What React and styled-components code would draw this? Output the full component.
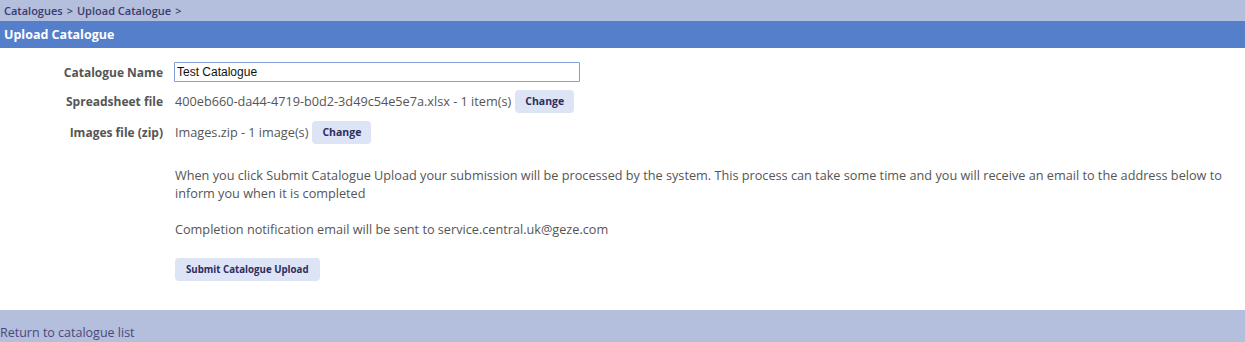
import React, { useState } from "react";
import styled, { createGlobalStyle } from "styled-components";

const GlobalStyle = createGlobalStyle`
  html, body {
    margin: 0;
    padding: 0;
    background: #ffffff;
  }
  body {
    font-family: "Open Sans", "Noto Sans", sans-serif;
    font-size: 12.7px;
    color: #555555;
  }
`;

const Page = styled.div`
  width: 1245px;
  min-height: 342px;
  display: flex;
  flex-direction: column;
`;

const Breadcrumb = styled.div`
  height: 21px;
  background: #b4bedd;
  display: flex;
  align-items: center;
  padding-left: 4px;
  font-size: 11px;
  font-weight: 600;
  color: #3b3b6b;
  gap: 4px;
`;

const TitleBar = styled.div`
  height: 27px;
  background: #557ecb;
  display: flex;
  align-items: center;
  padding-left: 4px;
  color: #ffffff;
  font-size: 12.5px;
  font-weight: 700;
`;

const Form = styled.div`
  display: grid;
  grid-template-columns: 163px 1fr;
  column-gap: 12px;
  padding-top: 14px;
  padding-bottom: 28px;
`;

const Label = styled.div`
  font-size: 12px;
  font-weight: 700;
  color: #555555;
  height: ${(p) => p.h || 29}px;
  display: flex;
  align-items: center;
  justify-content: flex-end;
`;

const Value = styled.div`
  height: ${(p) => p.h || 29}px;
  display: flex;
  align-items: center;
  gap: 4px;
`;

const NameInput = styled.input`
  box-sizing: border-box;
  width: 406px;
  height: 20px;
  margin-left: -1px;
  border: 1px solid #7f9fd6;
  border-radius: 1px;
  padding: 0 2px;
  font-family: "Liberation Sans", Arial, sans-serif;
  font-size: 12px;
  color: #111111;
  outline: none;
`;

const SmallButton = styled.button`
  border: none;
  border-radius: 4px;
  background: #dce4f6;
  color: #2d2d5c;
  font-family: "Open Sans", "Noto Sans", sans-serif;
  font-size: ${(p) => p.fs || 10.5}px;
  font-weight: 700;
  height: 23px;
  padding: 0 ${(p) => p.pad || 10}px;
  cursor: pointer;
`;

const Info = styled.div`
  grid-column: 2;
  padding-top: 22px;
  line-height: 18px;
  padding-right: 8px;

  p {
    margin: 0 0 18px 0;
  }
  p:last-of-type {
    margin-bottom: 20px;
  }
`;

const Footer = styled.div`
  height: 32px;
  margin-top: auto;
  background: #b4bedd;
  display: flex;
  align-items: flex-end;
  padding-bottom: 1px;
  box-sizing: border-box;
`;

const FooterLink = styled.a`
  color: #4a4a78;
  font-size: 12.5px;
  text-decoration: none;
  cursor: pointer;
`;

export default function App() {
  const [name, setName] = useState("Test Catalogue");

  return (
    <Page>
      <GlobalStyle />
      <Breadcrumb>
        <span>Catalogues</span>
        <span>&gt;</span>
        <span>Upload Catalogue</span>
        <span>&gt;</span>
      </Breadcrumb>
      <TitleBar>Upload Catalogue</TitleBar>
      <Form>
        <Label h={20}>Catalogue Name</Label>
        <Value h={20}>
          <NameInput value={name} onChange={(e) => setName(e.target.value)} />
        </Value>
        <Label h={38}>Spreadsheet file</Label>
        <Value h={38}>
          <span>400eb660-da44-4719-b0d2-3d49c54e5e7a.xlsx - 1 item(s)</span>
          <SmallButton>Change</SmallButton>
        </Value>
        <Label h={24}>Images file (zip)</Label>
        <Value h={24}>
          <span>Images.zip - 1 image(s)</span>
          <SmallButton>Change</SmallButton>
        </Value>
        <Info>
          <p>
            When you click Submit Catalogue Upload your submission will be
            processed by the system. This process can take some time and you
            will receive an email to the address below to inform you when it
            is completed
          </p>
          <p>Completion notification email will be sent to service.central.uk@geze.com</p>
          <SmallButton fs={9.7} pad={11}>Submit Catalogue Upload</SmallButton>
        </Info>
      </Form>
      <Footer>
        <FooterLink>Return to catalogue list</FooterLink>
      </Footer>
    </Page>
  );
}
